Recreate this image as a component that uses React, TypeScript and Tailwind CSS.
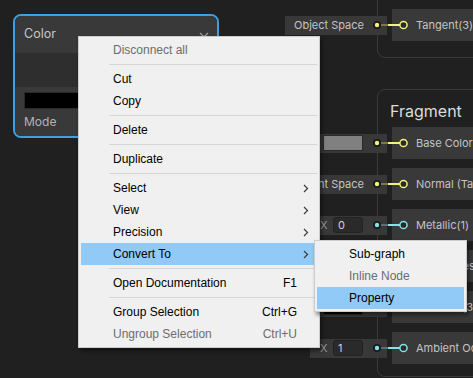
import type { ReactNode } from 'react';

const canvasFont = { fontFamily: 'Inter, "Noto Sans", sans-serif' };
const menuFont = { fontFamily: '"Liberation Sans", Arial, sans-serif' };

type PortKind = 'vec3' | 'float';

interface StackRow {
  label: string;
  kind: PortKind;
  port: ReactNode;
}

const portColor: Record<PortKind, string> = {
  vec3: '#f2f37c',
  float: '#84e3e6',
};

// λ…Έλ“ μ…λ ¥ ν¬νΈμ™€ λΈ”λ΅μ„ μ‡λ” μ„ 
function Connector({ kind }: { kind: PortKind }) {
  const c = portColor[kind];
  return (
    <svg className="absolute left-[92px] top-0" width="40" height="32" viewBox="0 0 40 32">
      <circle cx="5" cy="16" r="4" fill="#1a1a1a" />
      <circle cx="5" cy="16" r="2.2" fill={c} />
      <line x1="9" y1="16" x2="16" y2="16" stroke={c} strokeOpacity="0.35" strokeWidth="2" />
      <line x1="16" y1="16" x2="28" y2="16" stroke={c} strokeWidth="2" />
      <circle cx="31.5" cy="16" r="3.6" fill="#2a2a2a" stroke={c} strokeWidth="1.5" />
    </svg>
  );
}

function SwatchPort({ color }: { color: string }) {
  return (
    <div className="h-[19px] bg-[#383838] flex items-center pl-[5px] pr-[24px]">
      <div className="w-[40px] h-[16px] border border-[#2a2a2a]" style={{ backgroundColor: color }} />
    </div>
  );
}

function FloatPort({ value }: { value: string }) {
  return (
    <div className="h-[19px] bg-[#383838] flex items-center pl-[10px] pr-[24px] text-[#9a9a9a] text-[11px]">
      <span className="w-[13px]">X</span>
      <div className="w-[30px] h-[16px] bg-[#2a2a2a] border border-[#222] rounded-[3px] flex items-center pl-[4px] text-[#d2d2d2]">
        {value}
      </div>
    </div>
  );
}

function TextPort({ text }: { text: string }) {
  return (
    <div className="h-[19px] bg-[#383838] flex items-center pl-[9px] pr-[23px] text-[#c4c4c4] text-[11px] whitespace-nowrap">
      {text}
    </div>
  );
}

function BlockRow({ row }: { row: StackRow }) {
  return (
    <div className="relative flex h-[32px]">
      <div className="w-[112px] flex justify-end items-center pr-[5px]">{row.port}</div>
      <div className="flex-1 bg-[#393939] flex items-center pl-[24px] text-[11px] text-[#c4c4c4] whitespace-nowrap overflow-hidden">
        {row.label}
      </div>
      <Connector kind={row.kind} />
    </div>
  );
}

const fragmentRows: StackRow[] = [
  { label: 'Base Color', kind: 'vec3', port: <SwatchPort color="#808080" /> },
  { label: 'Normal (Tangent Space)', kind: 'vec3', port: <TextPort text="Tangent Space" /> },
  { label: 'Metallic(1)', kind: 'float', port: <FloatPort value="0" /> },
  { label: 'Smoothness(1)', kind: 'float', port: <FloatPort value="0.5" /> },
  { label: 'Emission(3)', kind: 'vec3', port: <SwatchPort color="#000000" /> },
  { label: 'Ambient Occlusion(1)', kind: 'float', port: <FloatPort value="1" /> },
];

interface MenuItem {
  label?: string;
  shortcut?: string;
  disabled?: boolean;
  submenu?: boolean;
  active?: boolean;
  separator?: boolean;
}

const mainMenu: MenuItem[] = [
  { label: 'Disconnect all', disabled: true },
  { separator: true },
  { label: 'Cut' },
  { label: 'Copy' },
  { separator: true },
  { label: 'Delete' },
  { separator: true },
  { label: 'Duplicate' },
  { separator: true },
  { label: 'Select', submenu: true },
  { label: 'View', submenu: true },
  { label: 'Precision', submenu: true },
  { label: 'Convert To', submenu: true, active: true },
  { separator: true },
  { label: 'Open Documentation', shortcut: 'F1' },
  { separator: true },
  { label: 'Group Selection', shortcut: 'Ctrl+G' },
  { label: 'Ungroup Selection', shortcut: 'Ctrl+U', disabled: true },
];

const convertMenu: MenuItem[] = [
  { label: 'Sub-graph' },
  { label: 'Inline Node', disabled: true },
  { label: 'Property', active: true },
];

function MenuList({ items }: { items: MenuItem[] }) {
  return (
    <>
      {items.map((item, i) =>
        item.separator ? (
          <div key={i} className="h-[7px] flex items-center pl-[28px]">
            <div className="h-px w-full bg-[#d5d5d5]" />
          </div>
        ) : (
          <div
            key={i}
            className={`h-[22px] flex items-center pl-[32px] ${item.active ? 'bg-[#91c9f7]' : ''} ${
              item.disabled ? 'text-[#6d6d6d]' : 'text-black'
            }`}
          >
            <span className="flex-1 whitespace-nowrap">{item.label}</span>
            {item.shortcut && <span className="pr-[20px]">{item.shortcut}</span>}
            {item.submenu && (
              <svg className="mr-[8px]" width="6" height="9" viewBox="0 0 6 9">
                <polyline points="1,1 4.5,4.5 1,8" fill="none" stroke="#3c3c3c" strokeWidth="1.2" />
              </svg>
            )}
          </div>
        )
      )}
    </>
  );
}

export default function App() {
  return (
    <div className="relative w-[473px] h-[378px] overflow-hidden bg-[#202020]" style={canvasFont}>
      {/* Color λ…Έλ“ (μ„ νƒλ¨) */}
      <div className="absolute left-[13px] top-[14px] w-[206px] h-[124px] border-2 border-[#3aa2e4] rounded-[8px] overflow-hidden flex flex-col">
        <div className="h-[37px] shrink-0 bg-[#393939] flex items-center justify-between pl-[9px] pr-[8px] text-[12.5px] text-[#c8c8c8]">
          <span>Color</span>
          <svg width="10" height="6" viewBox="0 0 10 6">
            <polyline points="1,1 5,5 9,1" fill="none" stroke="#9a9a9a" strokeWidth="1.3" />
          </svg>
        </div>
        <div className="h-[34px] shrink-0 bg-[#2e2e2e]" />
        <div className="flex-1 bg-[#393939] px-[9px] pt-[5px] flex flex-col gap-[4px]">
          <div className="h-[17px] bg-black border border-[#2a2a2a]" />
          <span className="text-[12px] text-[#b4b4b4]">Mode</span>
        </div>
      </div>

      {/* Vertex μ¤νƒ (μ„μ½) */}
      <div className="absolute left-[377px] top-[-40px] w-[130px] h-[98px] border border-[#3b3b3b] rounded-[8px]" />
      <div className="absolute left-[280px] top-[9px] w-[200px]">
        <BlockRow row={{ label: 'Tangent(3)', kind: 'vec3', port: <TextPort text="Object Space" /> }} />
      </div>

      {/* Fragment μ¤νƒ */}
      <div className="absolute left-[377px] top-[89px] w-[130px] h-[288px] border border-[#3b3b3b] rounded-[8px] pl-[12px] pt-[9px]">
        <span className="text-[16px] text-[#dcdcdc]">Fragment</span>
      </div>
      <div className="absolute left-[280px] top-[127px] w-[200px] flex flex-col gap-[9px]">
        {fragmentRows.map((row) => (
          <BlockRow key={row.label} row={row} />
        ))}
      </div>

      {/* μ»¨ν…μ¤νΈ λ©”λ‰΄ */}
      <div
        className="absolute left-[78px] top-[36px] w-[242px] bg-[#f0f0f0] border border-[#cccccc] p-[2px] text-[12px] shadow-[2px_3px_4px_rgba(0,0,0,0.45)]"
        style={menuFont}
      >
        <MenuList items={mainMenu} />
      </div>
      <div
        className="absolute left-[314px] top-[240px] w-[153px] bg-[#f0f0f0] border border-[#cccccc] p-[2px] text-[12px] shadow-[2px_3px_4px_rgba(0,0,0,0.45)]"
        style={menuFont}
      >
        <MenuList items={convertMenu} />
      </div>
    </div>
  );
}
